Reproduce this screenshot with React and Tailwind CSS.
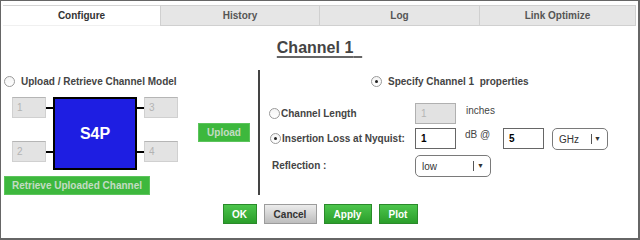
import React from "react";

function Radio({ checked }) {
  return (
    <div className="w-[11px] h-[11px] rounded-full border border-[#9a9a9a] bg-gradient-to-b from-[#f4f4f4] to-[#ffffff] flex items-center justify-center shrink-0">
      {checked && <div className="w-[3px] h-[3px] rounded-full bg-[#222]" />}
    </div>
  );
}

function Port({ n }) {
  return (
    <div className="w-[34px] h-[21px] bg-[#e3e3e3] border border-[#d0d0d0] border-t-[#b5b5b5] text-[10px] leading-[19px] pl-[4px] text-[#b3b3b3]">
      {n}
    </div>
  );
}

function Select({ value, w, sep }) {
  return (
    <div className={`${w} h-[22px] rounded-[5px] border border-[#7a7a7a] bg-white flex items-center text-[10px] text-[#333] relative`}>
      <span className="pl-[6px]">{value}</span>
      <div className={`absolute top-[5px] h-[10px] w-px bg-[#555] ${sep}`} />
      <div className="absolute right-[6px] top-[6px] text-[7px] leading-[8px] text-[#333]">▼</div>
    </div>
  );
}

function Btn({ children, w, gray }) {
  return (
    <div
      className={`${w} h-[20px] flex items-center justify-center text-[10px] font-bold border ${
        gray
          ? "bg-gradient-to-b from-[#ececec] to-[#bdbdbd] border-[#9c9c9c] text-[#333]"
          : "bg-gradient-to-b from-[#4cc54c] to-[#2a9e2a] border-[#2a8a2a] text-white"
      }`}
    >
      {children}
    </div>
  );
}

export default function App() {
  return (
    <div className="w-[640px] h-[240px] bg-white border border-[#666] border-r-2 border-b-2 font-['Liberation_Sans',Arial,sans-serif] text-[#444] overflow-hidden">
      {/* Tabs */}
      <div className="flex ml-[2px] mr-[1px] mt-[4px] h-[21px] text-[10px] font-bold">
        <div className="w-[157px] border-t border-[#d4d4d4] border-b border-b-[#f0f0f0] flex items-center justify-center text-[#333]">
          Configure
        </div>
        <div className="w-[160px] bg-[#e6e6e6] border border-[#d0d0d0] flex items-center justify-center text-[#555]">
          History
        </div>
        <div className="w-[160px] bg-[#e6e6e6] border border-l-0 border-[#d0d0d0] flex items-center justify-center text-[#555]">
          Log
        </div>
        <div className="w-[156px] bg-[#e6e6e6] border border-l-0 border-[#d0d0d0] flex items-center justify-center text-[#555]">
          Link Optimize
        </div>
      </div>

      {/* Title */}
      <div className="mt-[12px] h-[20px] text-center text-[16px] leading-[20px] font-bold text-[#444]">
        <span className="underline underline-offset-[3px] decoration-[2px] decoration-[#666]">Channel 1{"\u00a0\u00a0"}</span>
      </div>

      {/* Main */}
      <div className="mt-[12px] h-[125px] flex">
        {/* Left */}
        <div className="w-[257px] flex flex-col">
          <div className="mt-[4px] h-[14px] flex items-center ml-[3px] gap-[6px]">
            <Radio />
            <span className="text-[10px] font-bold text-[#444]">Upload / Retrieve Channel Model</span>
          </div>
          <div className="mt-[9px] ml-[11px] flex items-start">
            <div className="flex flex-col gap-[23px]">
              <div className="flex items-center">
                <Port n="1" />
                <div className="w-[7px] h-[2px] bg-black" />
              </div>
              <div className="flex items-center">
                <Port n="2" />
                <div className="w-[7px] h-[2px] bg-black" />
              </div>
            </div>
            <div className="w-[84px] h-[73px] bg-[#1e1ee2] border-2 border-black flex items-center justify-center text-white text-[16px] font-bold">
              S4P
            </div>
            <div className="flex flex-col gap-[23px]">
              <div className="flex items-center">
                <div className="w-[7px] h-[2px] bg-black" />
                <Port n="3" />
              </div>
              <div className="flex items-center">
                <div className="w-[7px] h-[2px] bg-black" />
                <Port n="4" />
              </div>
            </div>
            <div className="ml-[20px] mt-[26px] w-[52px] h-[19px] bg-[#3db83d] border border-[#5cc45c] flex items-center justify-center text-[10px] font-bold text-[#c4dcc4]">
              Upload
            </div>
          </div>
          <div className="mt-[6px] ml-[3px] w-[146px] h-[19px] bg-[#3db83d] border border-[#5cc45c] flex items-center justify-center text-[10px] font-bold text-[#c4dcc4]">
            Retrieve Uploaded Channel
          </div>
        </div>

        {/* Divider */}
        <div className="w-[2px] bg-[#444]" />

        {/* Right */}
        <div className="flex-1 flex flex-col text-[10px]">
          <div className="mt-[4px] h-[14px] flex items-center ml-[111px] gap-[6px]">
            <Radio checked />
            <span className="font-bold text-[#444]">Specify Channel 1&nbsp; properties</span>
          </div>

          <div className="mt-[15px] h-[21px] flex">
            <div className="w-[155px] pl-[9px] flex items-center gap-[1px] font-bold">
              <Radio />
              <span>Channel Length</span>
            </div>
            <div className="w-[41px] h-[21px] bg-[#e2e2e2] border border-[#b0b0b0] text-[#b5b5b5] pl-[5px] leading-[19px]">
              1
            </div>
            <span className="ml-[10px] mt-[2px] leading-[12px] text-[#444]">inches</span>
          </div>

          <div className="mt-[4px] h-[21px] flex">
            <div className="w-[155px] pl-[10px] flex items-center gap-[1px] font-bold">
              <Radio checked />
              <span>Insertion Loss at Nyquist:</span>
            </div>
            <div className="w-[41px] h-[21px] bg-white border border-[#666] text-black font-bold pl-[5px] leading-[19px]">
              1
            </div>
            <span className="ml-[9px] w-[38px] mt-[1px] leading-[12px] text-[#444]">dB @</span>
            <div className="w-[41px] h-[21px] bg-white border border-[#666] text-black font-bold pl-[5px] leading-[19px]">
              5
            </div>
            <div className="ml-[8px]">
              <Select value="GHz" w="w-[56px]" sep="left-[38px]" />
            </div>
          </div>

          <div className="mt-[6px] h-[21px] flex">
            <div className="w-[155px] pl-[12px] flex items-center font-bold">
              <span>Reflection :</span>
            </div>
            <Select value="low" w="w-[76px]" sep="left-[57px]" />
          </div>
        </div>
      </div>

      {/* Bottom buttons */}
      <div className="mt-[9px] flex justify-center gap-[7px] pl-[1px]">
        <Btn w="w-[34px]">OK</Btn>
        <Btn w="w-[53px]" gray>Cancel</Btn>
        <Btn w="w-[48px]">Apply</Btn>
        <Btn w="w-[39px]">Plot</Btn>
      </div>
    </div>
  );
}
